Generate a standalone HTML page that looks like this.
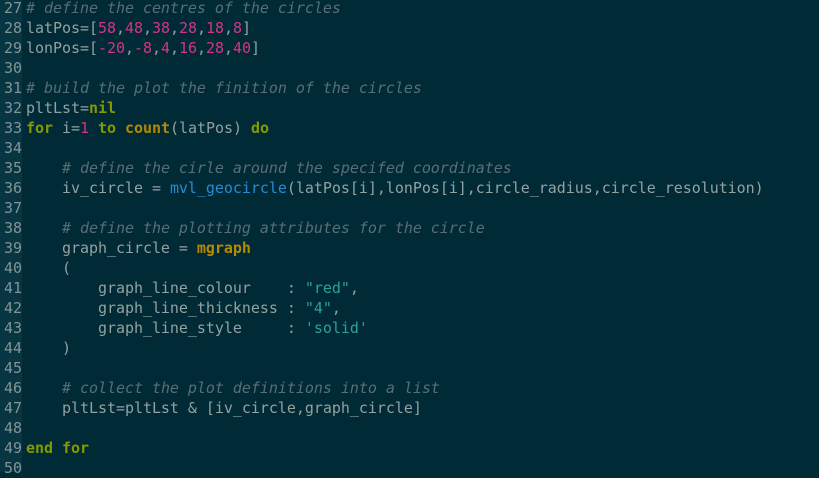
<!DOCTYPE html>
<html><head><style>
body{margin:0;width:819px;height:472px;overflow:hidden;background:#002b36;font-family:"DejaVu Sans Mono","Liberation Mono",monospace;font-size:15px;}
.g{position:absolute;left:0;top:0;width:22px;height:472px;background:#073642;}
.c{position:absolute;left:0;top:-2px;}
.l{height:20px;line-height:20px;white-space:pre;color:#93a1a1;letter-spacing:-0.035px;}
.n{display:inline-block;width:22px;text-align:right;color:#839496;margin-right:4px;}
.cm{color:#586e75;font-style:italic}
.num{color:#d33682}.k{color:#859900;font-weight:bold}.y{color:#b58900;font-weight:bold}
.b{color:#268bd2}.s{color:#2aa198}
</style></head><body><div class="g"></div><div class="c">
<div class="l"><span class="n">27</span><span class="cm"># define the centres of the circles</span></div>
<div class="l"><span class="n">28</span>latPos=[<span class="num">58</span>,<span class="num">48</span>,<span class="num">38</span>,<span class="num">28</span>,<span class="num">18</span>,<span class="num">8</span>]</div>
<div class="l"><span class="n">29</span>lonPos=[<span class="num">-20</span>,<span class="num">-8</span>,<span class="num">4</span>,<span class="num">16</span>,<span class="num">28</span>,<span class="num">40</span>]</div>
<div class="l"><span class="n">30</span></div>
<div class="l"><span class="n">31</span><span class="cm"># build the plot the finition of the circles</span></div>
<div class="l"><span class="n">32</span>pltLst=<span class="k">nil</span></div>
<div class="l"><span class="n">33</span><span class="k">for</span> i=<span class="num">1</span> <span class="k">to</span> <span class="y">count</span>(latPos) <span class="k">do</span></div>
<div class="l"><span class="n">34</span></div>
<div class="l"><span class="n">35</span>    <span class="cm"># define the cirle around the specifed coordinates</span></div>
<div class="l"><span class="n">36</span>    iv_circle = <span class="b">mvl_geocircle</span>(latPos[i],lonPos[i],circle_radius,circle_resolution)</div>
<div class="l"><span class="n">37</span></div>
<div class="l"><span class="n">38</span>    <span class="cm"># define the plotting attributes for the circle</span></div>
<div class="l"><span class="n">39</span>    graph_circle = <span class="y">mgraph</span></div>
<div class="l"><span class="n">40</span>    (</div>
<div class="l"><span class="n">41</span>        graph_line_colour    : <span class="s">"red"</span>,</div>
<div class="l"><span class="n">42</span>        graph_line_thickness : <span class="s">"4"</span>,</div>
<div class="l"><span class="n">43</span>        graph_line_style     : <span class="s">'solid'</span></div>
<div class="l"><span class="n">44</span>    )</div>
<div class="l"><span class="n">45</span></div>
<div class="l"><span class="n">46</span>    <span class="cm"># collect the plot definitions into a list</span></div>
<div class="l"><span class="n">47</span>    pltLst=pltLst &amp; [iv_circle,graph_circle]</div>
<div class="l"><span class="n">48</span></div>
<div class="l"><span class="n">49</span><span class="k">end</span> <span class="k">for</span></div>
<div class="l"><span class="n">50</span></div>
</div></body></html>
